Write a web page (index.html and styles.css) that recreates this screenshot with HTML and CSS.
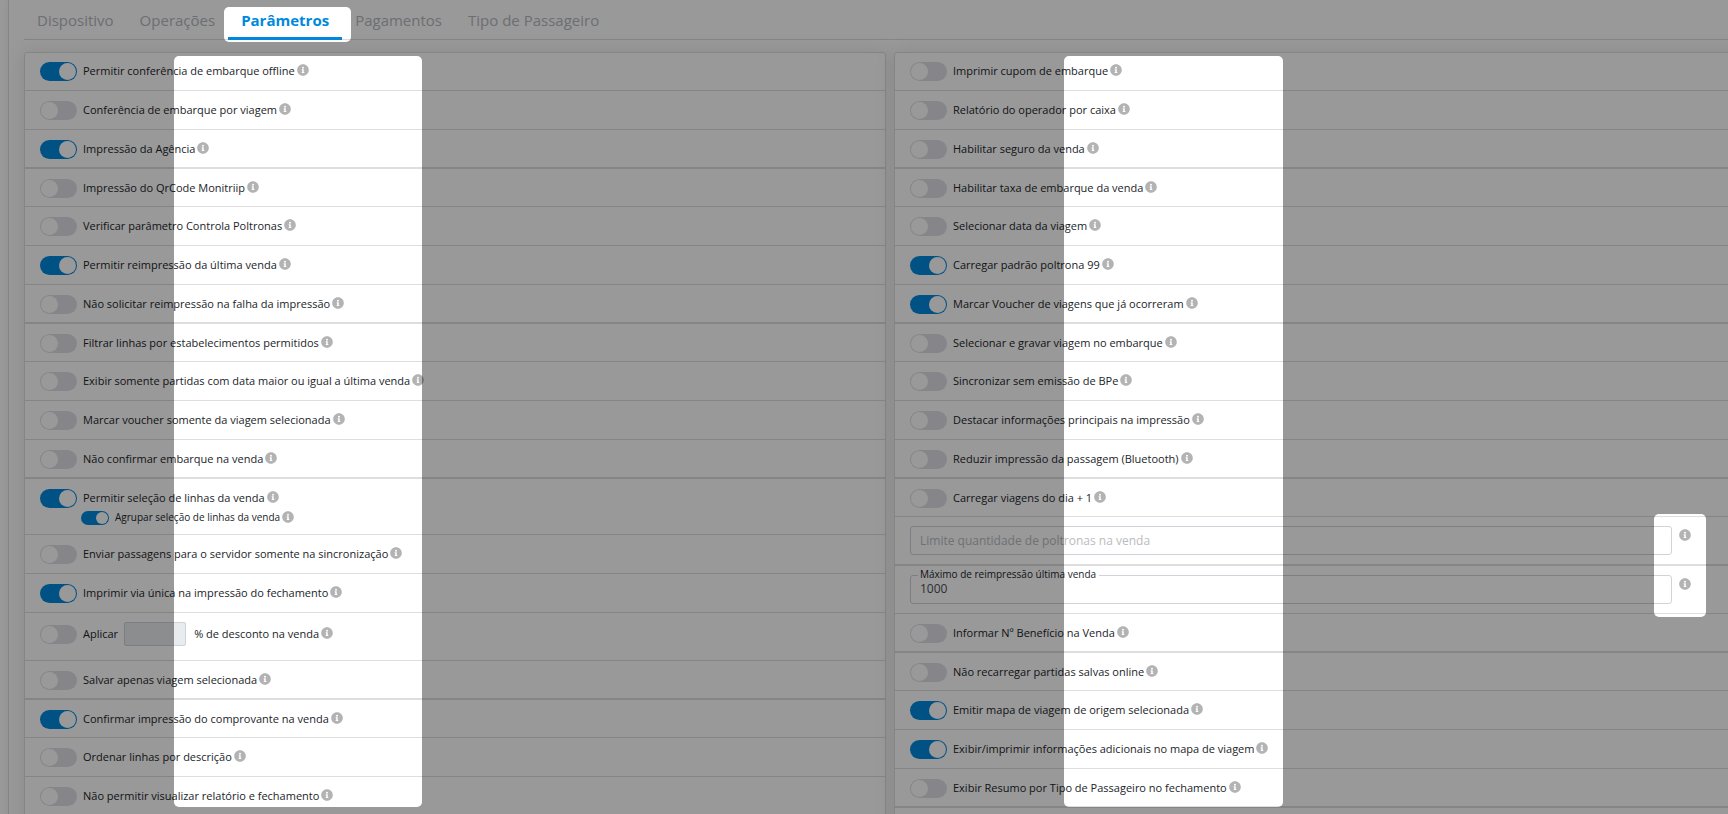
FILE: index.html
```
<!DOCTYPE html>
<html lang="pt-BR">

<head>
    <meta charset="UTF-8">
    <meta name="viewport" content="width=device-width, initial-scale=1.0">
    <title>Parâmetros</title>
    <link rel="stylesheet" href="styles.css">
</head>

<body>
    <svg class="symbols" aria-hidden="true">
        <symbol id="info" viewBox="0 0 512 512">
            <path fill="currentColor" fill-rule="evenodd" d="M256 8C119 8 8 119 8 256s111 248 248 248 248-111 248-248S393 8 256 8zm0 110a42 42 0 1 1 0 84 42 42 0 0 1 0-84zm56 254c0 7-5 12-12 12h-88c-7 0-12-5-12-12v-24c0-7 5-12 12-12h12v-64h-12c-7 0-12-5-12-12v-24c0-7 5-12 12-12h64c7 0 12 5 12 12v100h12c7 0 12 5 12 12v24z"/>
        </symbol>
    </svg>

    <main class="page">
        <nav class="tabs">
            <a href="#dispositivo">Dispositivo</a>
            <a href="#operacoes">Operações</a>
            <a href="#parametros" class="active">Parâmetros</a>
            <a href="#pagamentos">Pagamentos</a>
            <a href="#tipo">Tipo de Passageiro</a>
        </nav>

        <div class="columns">
            <section class="panel">
                <div class="row"><input type="checkbox" class="switch" id="p1" checked><label for="p1">Permitir conferência de embarque offline</label><svg class="info"><use href="#info"/></svg></div>
                <div class="row"><input type="checkbox" class="switch" id="p2"><label for="p2">Conferência de embarque por viagem</label><svg class="info"><use href="#info"/></svg></div>
                <div class="row thick"><input type="checkbox" class="switch" id="p3" checked><label for="p3">Impressão da Agência</label><svg class="info"><use href="#info"/></svg></div>
                <div class="row"><input type="checkbox" class="switch" id="p4"><label for="p4">Impressão do QrCode Monitriip</label><svg class="info"><use href="#info"/></svg></div>
                <div class="row"><input type="checkbox" class="switch" id="p5"><label for="p5">Verificar parâmetro Controla Poltronas</label><svg class="info"><use href="#info"/></svg></div>
                <div class="row"><input type="checkbox" class="switch" id="p6" checked><label for="p6">Permitir reimpressão da última venda</label><svg class="info"><use href="#info"/></svg></div>
                <div class="row thick"><input type="checkbox" class="switch" id="p7"><label for="p7">Não solicitar reimpressão na falha da impressão</label><svg class="info"><use href="#info"/></svg></div>
                <div class="row"><input type="checkbox" class="switch" id="p8"><label for="p8">Filtrar linhas por estabelecimentos permitidos</label><svg class="info"><use href="#info"/></svg></div>
                <div class="row"><input type="checkbox" class="switch" id="p9"><label for="p9">Exibir somente partidas com data maior ou igual a última venda</label><svg class="info"><use href="#info"/></svg></div>
                <div class="row"><input type="checkbox" class="switch" id="p10"><label for="p10">Marcar voucher somente da viagem selecionada</label><svg class="info"><use href="#info"/></svg></div>
                <div class="row thick"><input type="checkbox" class="switch" id="p11"><label for="p11">Não confirmar embarque na venda</label><svg class="info"><use href="#info"/></svg></div>
                <div class="row row-group">
                    <input type="checkbox" class="switch" id="p12" checked><label for="p12">Permitir seleção de linhas da venda</label><svg class="info"><use href="#info"/></svg>
                    <div class="sub">
                        <input type="checkbox" class="switch small" id="p13" checked><label for="p13">Agrupar seleção de linhas da venda</label><svg class="info"><use href="#info"/></svg>
                    </div>
                </div>
                <div class="row"><input type="checkbox" class="switch" id="p14"><label for="p14">Enviar passagens para o servidor somente na sincronização</label><svg class="info"><use href="#info"/></svg></div>
                <div class="row"><input type="checkbox" class="switch" id="p15" checked><label for="p15">Imprimir via única na impressão do fechamento</label><svg class="info"><use href="#info"/></svg></div>
                <div class="row discount">
                    <input type="checkbox" class="switch" id="p16"><label for="p16">Aplicar</label>
                    <input type="text" class="percent" id="percent" disabled>
                    <label for="percent">% de desconto na venda</label><svg class="info"><use href="#info"/></svg>
                </div>
                <div class="row thick"><input type="checkbox" class="switch" id="p17"><label for="p17">Salvar apenas viagem selecionada</label><svg class="info"><use href="#info"/></svg></div>
                <div class="row"><input type="checkbox" class="switch" id="p18" checked><label for="p18">Confirmar impressão do comprovante na venda</label><svg class="info"><use href="#info"/></svg></div>
                <div class="row"><input type="checkbox" class="switch" id="p19"><label for="p19">Ordenar linhas por descrição</label><svg class="info"><use href="#info"/></svg></div>
                <div class="row"><input type="checkbox" class="switch" id="p20"><label for="p20">Não permitir visualizar relatório e fechamento</label><svg class="info"><use href="#info"/></svg></div>
            </section>

            <section class="panel">
                <div class="row"><input type="checkbox" class="switch" id="q1"><label for="q1">Imprimir cupom de embarque</label><svg class="info"><use href="#info"/></svg></div>
                <div class="row"><input type="checkbox" class="switch" id="q2"><label for="q2">Relatório do operador por caixa</label><svg class="info"><use href="#info"/></svg></div>
                <div class="row thick"><input type="checkbox" class="switch" id="q3"><label for="q3">Habilitar seguro da venda</label><svg class="info"><use href="#info"/></svg></div>
                <div class="row"><input type="checkbox" class="switch" id="q4"><label for="q4">Habilitar taxa de embarque da venda</label><svg class="info"><use href="#info"/></svg></div>
                <div class="row"><input type="checkbox" class="switch" id="q5"><label for="q5">Selecionar data da viagem</label><svg class="info"><use href="#info"/></svg></div>
                <div class="row"><input type="checkbox" class="switch" id="q6" checked><label for="q6">Carregar padrão poltrona 99</label><svg class="info"><use href="#info"/></svg></div>
                <div class="row thick"><input type="checkbox" class="switch" id="q7" checked><label for="q7">Marcar Voucher de viagens que já ocorreram</label><svg class="info"><use href="#info"/></svg></div>
                <div class="row"><input type="checkbox" class="switch" id="q8"><label for="q8">Selecionar e gravar viagem no embarque</label><svg class="info"><use href="#info"/></svg></div>
                <div class="row"><input type="checkbox" class="switch" id="q9"><label for="q9">Sincronizar sem emissão de BPe</label><svg class="info"><use href="#info"/></svg></div>
                <div class="row"><input type="checkbox" class="switch" id="q10"><label for="q10">Destacar informações principais na impressão</label><svg class="info"><use href="#info"/></svg></div>
                <div class="row thick"><input type="checkbox" class="switch" id="q11"><label for="q11">Reduzir impressão da passagem (Bluetooth)</label><svg class="info"><use href="#info"/></svg></div>
                <div class="row"><input type="checkbox" class="switch" id="q12"><label for="q12">Carregar viagens do dia + 1</label><svg class="info"><use href="#info"/></svg></div>
                <div class="row field-row thick">
                    <div class="field"><input type="text" placeholder="Limite quantidade de poltronas na venda" aria-label="Limite quantidade de poltronas na venda"></div>
                    <svg class="info"><use href="#info"/></svg>
                </div>
                <div class="row field-row">
                    <div class="field"><label for="reimpressao">Máximo de reimpressão última venda</label><input type="text" id="reimpressao" value="1000"></div>
                    <svg class="info"><use href="#info"/></svg>
                </div>
                <div class="row thick"><input type="checkbox" class="switch" id="q13"><label for="q13">Informar Nº Benefício na Venda</label><svg class="info"><use href="#info"/></svg></div>
                <div class="row"><input type="checkbox" class="switch" id="q14"><label for="q14">Não recarregar partidas salvas online</label><svg class="info"><use href="#info"/></svg></div>
                <div class="row"><input type="checkbox" class="switch" id="q15" checked><label for="q15">Emitir mapa de viagem de origem selecionada</label><svg class="info"><use href="#info"/></svg></div>
                <div class="row"><input type="checkbox" class="switch" id="q16" checked><label for="q16">Exibir/imprimir informações adicionais no mapa de viagem</label><svg class="info"><use href="#info"/></svg></div>
                <div class="row thick"><input type="checkbox" class="switch" id="q17"><label for="q17">Exibir Resumo por Tipo de Passageiro no fechamento</label><svg class="info"><use href="#info"/></svg></div>
            </section>
        </div>
    </main>

    <!-- dark layer with the highlighted areas cut out -->
    <svg class="overlay" aria-hidden="true">
        <mask id="spots">
            <rect width="100%" height="100%" fill="#fff"/>
            <rect x="224" y="7" width="127" height="35" rx="5"/>
            <rect x="174" y="56" width="248" height="751" rx="5"/>
            <rect x="1064" y="56" width="219" height="751" rx="5"/>
            <rect x="1654" y="514" width="52" height="103" rx="5"/>
        </mask>
        <rect width="100%" height="100%" fill="#000" fill-opacity="0.4" mask="url(#spots)"/>
    </svg>
</body>

</html>
```

FILE: styles.css
```
* {
    box-sizing: border-box;
}

body {
    margin: 0;
    height: 100vh;
    overflow: hidden;
    background-color: #fff;
    color: #212529;
    font-family: "Open Sans", "Noto Sans", sans-serif;
    font-size: 11px;
    line-height: 17px;
}

.symbols {
    display: none;
}

.page {
    min-height: 100%;
    margin-left: 8px;
    padding-left: 15px;
    border-left: 1px solid #dedede;
    box-shadow: 0 0 8px rgba(0, 0, 0, 0.06);
}

/* tabs */
.tabs {
    display: flex;
    height: 40px;
    border-bottom: 1px solid #dedede;
}

.tabs a {
    height: 40px;
    padding: 9px 13px 0;
    color: #b5b8c0;
    font-size: 15px;
    line-height: 22px;
    text-decoration: none;
}

.tabs .active {
    border-bottom: 3px solid #0088dd;
    color: #0088dd;
    font-weight: bold;
}

/* the second panel runs past the right edge of the window */
.columns {
    display: grid;
    grid-template-columns: 1fr 1fr;
    align-items: start;
    gap: 8px;
    margin: 12px -28px 0 0;
}

.panel {
    min-height: 800px;
    border: 1px solid #dedede;
    border-radius: 3px;
    background-color: #fff;
    box-shadow: 0 0 20px rgba(0, 0, 0, 0.1);
}

.row {
    display: flex;
    flex-wrap: wrap;
    align-items: center;
    align-content: flex-start;
    min-height: 39px;
    padding: 10px 15px 0;
    border-bottom: 1px solid #dedede;
}

.row:first-child {
    min-height: 38px;
    padding-top: 9px;
}

.row label {
    padding-bottom: 2px;
}

.thick {
    border-bottom-width: 2px;
}

.thick + .row {
    min-height: 38px;
}

.info {
    width: 12px;
    height: 12px;
    margin: 0 0 3px 2px;
    color: #b3b3b3;
}

/* switches */
.switch {
    appearance: none;
    width: 37px;
    height: 19px;
    margin: 0 6px 0 0;
    padding: 1px;
    border-radius: 10px;
    background-color: #dfe0e6;
    cursor: pointer;
}

.switch::before {
    content: "";
    display: block;
    width: 17px;
    height: 17px;
    border-radius: 50%;
    background-color: #fff;
}

.switch:checked {
    background-color: #0088dd;
}

.switch:checked::before {
    margin-left: auto;
}

.small {
    width: 28px;
    height: 14px;
}

.small::before {
    width: 12px;
    height: 12px;
}

.thick + .row-group {
    min-height: 56px;
}

.sub {
    display: flex;
    align-items: center;
    width: 100%;
    height: 20px;
    padding-left: 41px;
    font-size: 10px;
}

/* inputs */
.discount {
    min-height: 48px;
    padding-top: 9px;
}

.percent {
    width: 62px;
    height: 24px;
    margin: 0 8px 0 6px;
    border: 1px solid #ced4da;
    border-radius: 2px;
    background-color: #e9ecef;
}

.field-row {
    align-items: flex-start;
    min-height: 49px;
    padding: 9px 56px 0 15px;
}

.row.field-row {
    padding: 9px 64px 0 15px;
}

.thick + .field-row {
    min-height: 48px;
}

.field {
    position: relative;
    flex: 1;
}

.field input {
    display: block;
    width: 100%;
    height: 29px;
    padding: 0 9px;
    border: 1px solid #ced4da;
    border-radius: 3px;
    background-color: transparent;
    color: #495057;
    font: inherit;
    font-size: 12px;
}

.field label + input {
    padding-bottom: 2px;
}

.field input::placeholder {
    color: #b9bcc0;
}

.field label {
    position: absolute;
    top: -8px;
    left: 8px;
    padding: 0 3px 0 2px;
    background-color: #fff;
    font-size: 10px;
    line-height: 14px;
}

.field-row .info {
    margin: 3px 0 0 7px;
}

/* overlay */
.overlay {
    position: fixed;
    inset: 0;
    width: 100%;
    height: 100%;
    pointer-events: none;
}
```
